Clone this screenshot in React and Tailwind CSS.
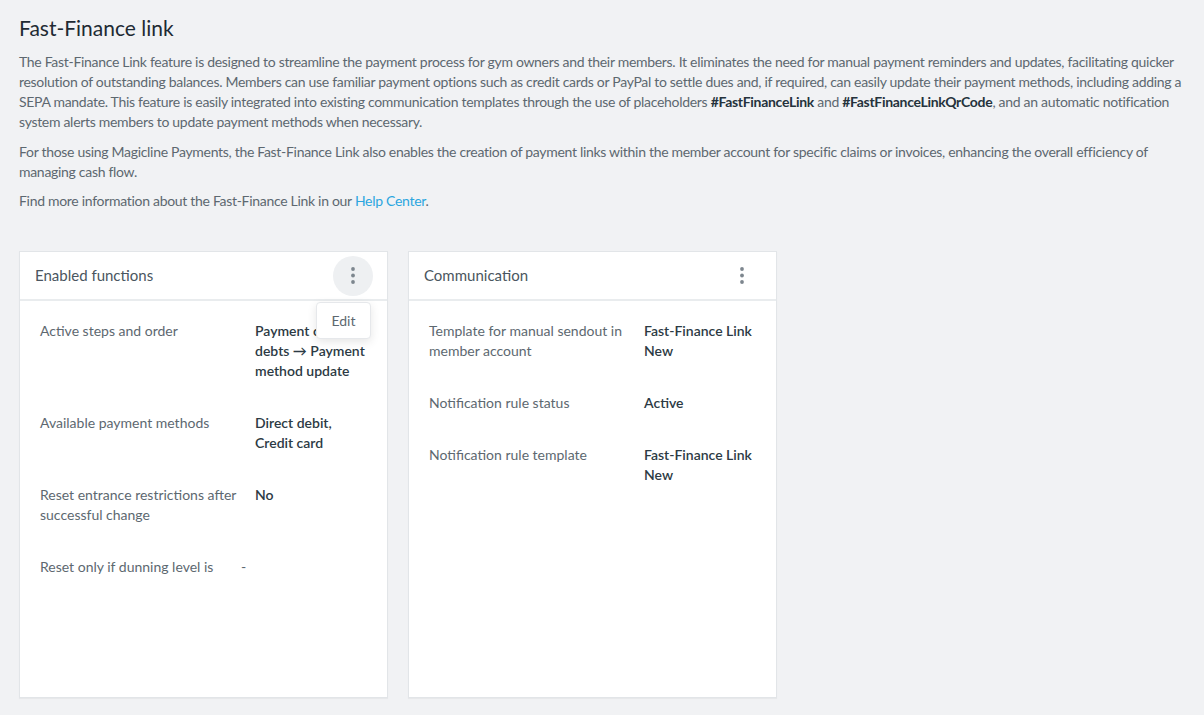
import React from 'react';

const font = { fontFamily: 'Lato, "Noto Sans", sans-serif' };

const Kebab = ({ active }) => (
  <button
    className={`w-10 h-10 rounded-full flex items-center justify-center ${
      active ? 'bg-[#eef0f2]' : ''
    }`}
  >
    <svg width="4" height="17" viewBox="0 0 4 17" fill="#7d868e">
      <circle cx="2" cy="2" r="1.9" />
      <circle cx="2" cy="8.5" r="1.9" />
      <circle cx="2" cy="15" r="1.9" />
    </svg>
  </button>
);

const Row = ({ label, value, labelW, dash }) => (
  <div className="flex">
    <div className={`${labelW} shrink-0 pr-4 text-[#5d6870]`}>{label}</div>
    {dash ? (
      <div className="-ml-[14px] text-[#5d6870]">-</div>
    ) : (
      <div className="flex-1 font-semibold text-[#2c3a44]">{value}</div>
    )}
  </div>
);

const Card = ({ title, rows, labelW, menuOpen }) => (
  <div className="relative w-[369px] h-[447px] bg-white border border-[#e2e5e8] shadow-[0_1px_1px_rgba(0,0,0,0.04)]">
    <div className="h-[49px] flex items-center justify-between pl-[15px] pr-[14px] border-b-2 border-[#e9ecee]">
      <span className="text-[15px] text-[#4a5660]">{title}</span>
      <Kebab active={menuOpen} />
    </div>
    {menuOpen && (
      <div className="absolute right-[16px] top-[50px] w-[55px] h-[37px] bg-white border border-[#e6e8eb] rounded-sm shadow-[0_3px_10px_rgba(0,0,0,0.10)] flex items-center justify-center text-[14px] text-[#5d6870] z-10">
        Edit
      </div>
    )}
    <div className="pt-[20px] pl-[20px] pr-[16px] flex flex-col gap-[32px] text-[14px] leading-[20px]">
      {rows.map((r) => (
        <Row key={r.label} label={r.label} value={r.value} labelW={labelW} dash={r.dash} />
      ))}
    </div>
  </div>
);

export default function App() {
  const enabled = [
    {
      label: 'Active steps and order',
      value: (
        <>
          Payment of
          <br />
          debts {'\u2192'} Payment
          <br />
          method update
        </>
      ),
    },
    { label: 'Available payment methods', value: 'Direct debit, Credit card' },
    { label: 'Reset entrance restrictions after successful change', value: 'No' },
    { label: 'Reset only if dunning level is', dash: true },
  ];
  const communication = [
    { label: 'Template for manual sendout in member account', value: 'Fast-Finance Link New' },
    { label: 'Notification rule status', value: 'Active' },
    { label: 'Notification rule template', value: 'Fast-Finance Link New' },
  ];

  const hash = 'font-bold text-[#25323c]';

  return (
    <div className="min-h-[715px] bg-[#f1f2f4] pl-[19px] pr-[10px] pt-[14px]" style={font}>
      <h1 className="text-[21px] leading-[28px] text-[#1e2a33]">Fast-Finance link</h1>
      <div className="mt-[10px] text-[14px] leading-[20px] text-[#5d6870] tracking-[-0.3px]">
        <p className="whitespace-nowrap">
          The Fast-Finance Link feature is designed to streamline the payment process for gym owners and their members. It eliminates the need for manual payment reminders and updates, facilitating quicker
          <br />
          resolution of outstanding balances. Members can use familiar payment options such as credit cards or PayPal to settle dues and, if required, can easily update their payment methods, including adding a
          <br />
          SEPA mandate. This feature is easily integrated into existing communication templates through the use of placeholders{' '}
          <b className={hash}>#FastFinanceLink</b> and <b className={hash}>#FastFinanceLinkQrCode</b>, and an automatic notification
          <br />
          system alerts members to update payment methods when necessary.
        </p>
        <p className="mt-[10px]">
          For those using Magicline Payments, the Fast-Finance Link also enables the creation of payment links within the member account for specific claims or invoices, enhancing the overall efficiency of
          <br />
          managing cash flow.
        </p>
        <p className="mt-[9px]">
          Find more information about the Fast-Finance Link in our{' '}
          <a className="text-[#2ba6df]">Help Center</a>.
        </p>
      </div>
      <div className="mt-[40px] flex gap-[20px]">
        <Card title="Enabled functions" rows={enabled} labelW="w-[215px]" menuOpen />
        <Card title="Communication" rows={communication} labelW="w-[215px]" />
      </div>
    </div>
  );
}
